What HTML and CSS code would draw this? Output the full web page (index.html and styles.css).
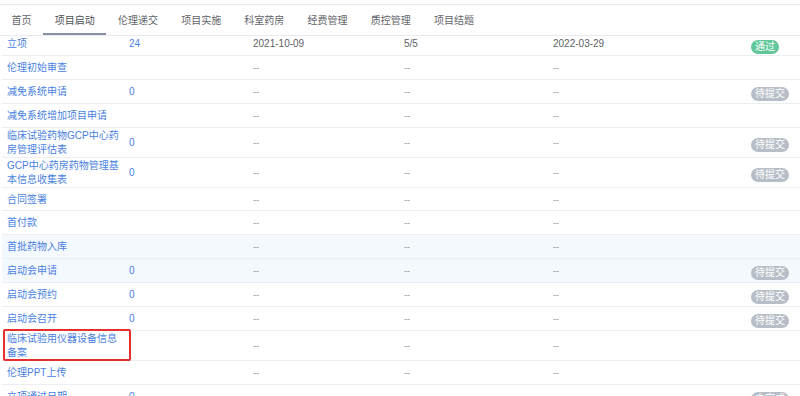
FILE: index.html
```html
<!DOCTYPE html>
<html lang="zh-CN">
<head>
<meta charset="utf-8">
<title>项目启动</title>
<link rel="stylesheet" href="styles.css">
</head>
<body>
<div class="page">
  <div class="tabs">
    <div class="tab">首页</div>
    <div class="tab active">项目启动</div>
    <div class="tab">伦理递交</div>
    <div class="tab">项目实施</div>
    <div class="tab">科室药房</div>
    <div class="tab">经费管理</div>
    <div class="tab">质控管理</div>
    <div class="tab">项目结题</div>
  </div>
  <div class="table">
    <div class="row first">
      <div class="c name">立项</div><div class="c num">24</div><div class="c">2021-10-09</div><div class="c">5/5</div><div class="c">2022-03-29</div><div class="c st"><span class="badge ok">通过</span></div>
    </div>
    <div class="row">
      <div class="c name">伦理初始审查</div><div class="c num"></div><div class="c dash">--</div><div class="c dash">--</div><div class="c dash">--</div><div class="c st"></div>
    </div>
    <div class="row">
      <div class="c name">减免系统申请</div><div class="c num">0</div><div class="c dash">--</div><div class="c dash">--</div><div class="c dash">--</div><div class="c st"><span class="badge">待提交</span></div>
    </div>
    <div class="row">
      <div class="c name">减免系统增加项目申请</div><div class="c num"></div><div class="c dash">--</div><div class="c dash">--</div><div class="c dash">--</div><div class="c st"></div>
    </div>
    <div class="row">
      <div class="c name">临床试验药物GCP中心药房管理评估表</div><div class="c num">0</div><div class="c dash">--</div><div class="c dash">--</div><div class="c dash">--</div><div class="c st"><span class="badge">待提交</span></div>
    </div>
    <div class="row">
      <div class="c name">GCP中心药房药物管理基本信息收集表</div><div class="c num">0</div><div class="c dash">--</div><div class="c dash">--</div><div class="c dash">--</div><div class="c st"><span class="badge">待提交</span></div>
    </div>
    <div class="row">
      <div class="c name">合同签署</div><div class="c num"></div><div class="c dash">--</div><div class="c dash">--</div><div class="c dash">--</div><div class="c st"></div>
    </div>
    <div class="row">
      <div class="c name">首付款</div><div class="c num"></div><div class="c dash">--</div><div class="c dash">--</div><div class="c dash">--</div><div class="c st"></div>
    </div>
    <div class="row hl">
      <div class="c name">首批药物入库</div><div class="c num"></div><div class="c dash">--</div><div class="c dash">--</div><div class="c dash">--</div><div class="c st"></div>
    </div>
    <div class="row hl">
      <div class="c name">启动会申请</div><div class="c num">0</div><div class="c dash">--</div><div class="c dash">--</div><div class="c dash">--</div><div class="c st"><span class="badge">待提交</span></div>
    </div>
    <div class="row">
      <div class="c name">启动会预约</div><div class="c num">0</div><div class="c dash">--</div><div class="c dash">--</div><div class="c dash">--</div><div class="c st"><span class="badge">待提交</span></div>
    </div>
    <div class="row">
      <div class="c name">启动会召开</div><div class="c num">0</div><div class="c dash">--</div><div class="c dash">--</div><div class="c dash">--</div><div class="c st"><span class="badge">待提交</span></div>
    </div>
    <div class="row">
      <div class="c name marked">临床试验用仪器设备信息备案<span class="mark"></span></div><div class="c num"></div><div class="c dash">--</div><div class="c dash">--</div><div class="c dash">--</div><div class="c st"></div>
    </div>
    <div class="row">
      <div class="c name">伦理PPT上传</div><div class="c num"></div><div class="c dash">--</div><div class="c dash">--</div><div class="c dash">--</div><div class="c st"></div>
    </div>
    <div class="row">
      <div class="c name">立项通过日期</div><div class="c num">0</div><div class="c dash">--</div><div class="c dash">--</div><div class="c dash">--</div><div class="c st"><span class="badge">未完成</span></div>
    </div>
  </div>
</div>
</body>
</html>
```
FILE: styles.css
```css
* { box-sizing: border-box; }
html, body { margin: 0; padding: 0; background: #fff; overflow: hidden; }
body {
  font-family: "Liberation Sans", "Noto Sans CJK SC", sans-serif;
  font-size: 10px;
  color: #606266;
}
.page { padding-top: 4px; }
.tabs {
  display: flex;
  border-top: 1px solid #ebebeb;
  border-bottom: 1px solid #e8eaee;
  height: 32px;
}
.tab {
  height: 30px;
  padding: 3px 11.6px 0;
  display: flex;
  align-items: center;
  color: #5f6369;
  border-bottom: 2px solid transparent;
  line-height: 14px;
}
.tab.active {
  color: #4a4f57;
  border-bottom-color: #8592a6;
}
.table { margin-left: 2px; }
.row {
  display: grid;
  grid-template-columns: 122px 124px 151px 149px 198px 1fr;
  min-height: 23.86px;
  border-bottom: 1px solid #eceef2;
}
.row.first { min-height: 20px; }
.row.first .c { align-items: flex-start; padding-top: 0.5px; }
.row.first .badge { margin-top: 3px; }
.row.hl { background: #f4f9fe; }
.c {
  display: flex;
  align-items: center;
  padding: 1px 2px 0 5px;
  line-height: 14px;
  color: #606266;
}
.c.name { color: #4a7fdf; }
.c.num { color: #4a7fdf; }
.c.dash { color: #8a8d92; font-size: 9px; }
.c.marked { position: relative; }
.mark {
  position: absolute;
  left: 1px;
  top: -2px;
  width: 128px;
  bottom: -1px;
  border: 2px solid #e63030;
  border-radius: 2px;
}
.c.st { padding-left: 5px; }
.badge {
  display: inline-block;
  height: 14px;
  line-height: 14px;
  padding: 0 4px;
  border-radius: 7px;
  background: #b8bec7;
  color: #fff;
  font-size: 10px;
  margin-top: 4px;
}
.badge.ok { background: #62c89c; }
```
